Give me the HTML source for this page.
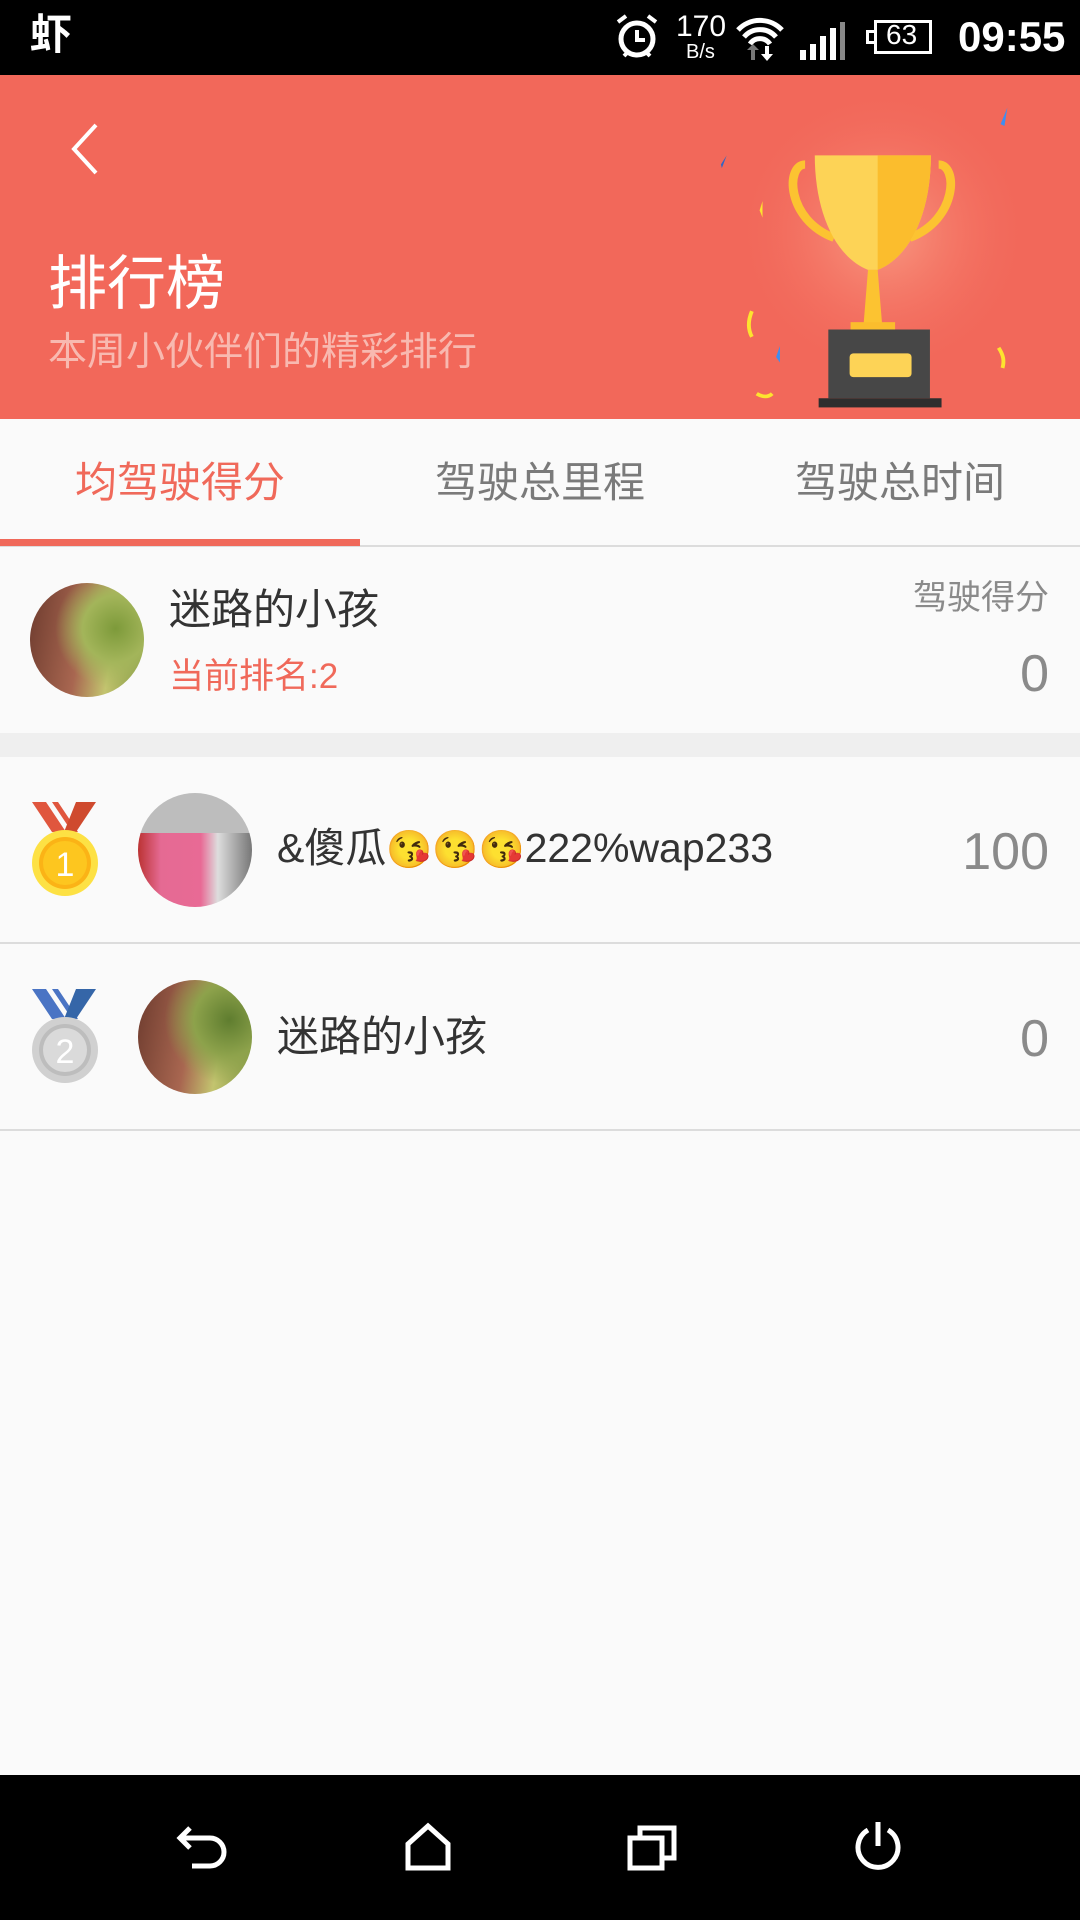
<!DOCTYPE html>
<html><head><meta charset="utf-8"><style>
*{margin:0;padding:0;box-sizing:border-box}
body{width:1080px;height:1920px;background:#fafafa;font-family:"Liberation Sans","Noto Sans CJK SC",sans-serif;position:relative;overflow:hidden}
.abs{position:absolute}
.sb{left:0;top:0;width:1080px;height:75px;background:#000;color:#fff}
.hd{left:0;top:75px;width:1080px;height:344px;background:#f2685a}
.t{white-space:nowrap;line-height:1}
.av{border-radius:50%;overflow:hidden}
.line{left:0;width:1080px;height:2px;background:#dcdcdc}
</style></head><body>
<div class="abs sb">
  <div class="abs t" style="left:30px;top:14px;font-size:42px;font-weight:bold">虾</div>
  <svg class="abs" style="left:612px;top:12px" width="50" height="50" viewBox="0 0 50 50"><circle cx="25" cy="27" r="16" fill="none" stroke="#fff" stroke-width="5"/><path d="M25 18v10h8M6 10l8-6M44 10l-8-6M12 44l4-4M38 44l-4-4" stroke="#fff" stroke-width="4" fill="none"/></svg>
  <div class="abs t" style="left:676px;top:12px;font-size:30px">170</div>
  <div class="abs t" style="left:686px;top:42px;font-size:20px">B/s</div>
  <svg class="abs" style="left:734px;top:12px" width="52" height="52" viewBox="0 0 52 52"><path d="M4 18a30 30 0 0 1 44 0M10 25a21 21 0 0 1 32 0M16 32a12 12 0 0 1 20 0" stroke="#fff" stroke-width="5" fill="none"/><path d="M17 48v-10l-4 0 6-6 6 6h-4v10z" fill="#777"/><path d="M31 34v8h-4l6 7 6-7h-4v-8z" fill="#fff"/></svg>
  <svg class="abs" style="left:798px;top:20px" width="48" height="40"><rect x="2" y="30" width="6" height="10" fill="#fff"/><rect x="12" y="24" width="6" height="16" fill="#fff"/><rect x="22" y="16" width="6" height="24" fill="#fff"/><rect x="32" y="8" width="6" height="32" fill="#fff"/><rect x="42" y="2" width="5" height="38" fill="#888"/></svg>
  <div class="abs" style="left:874px;top:20px;width:58px;height:34px;border:3px solid #fff"></div>
  <div class="abs" style="left:866px;top:30px;width:8px;height:14px;border:3px solid #fff;border-right:none"></div>
  <div class="abs t" style="left:886px;top:21px;font-size:28px;color:#fff">63</div>
  <div class="abs t" style="left:958px;top:16px;font-size:42px;font-weight:bold">09:55</div>
</div>
<div class="abs hd">
  <svg class="abs" style="left:66px;top:46px" width="36" height="56"><path d="M30 4L8 28l22 24" stroke="#fff" stroke-width="4" fill="none"/></svg>
  <div class="abs t" style="left:48px;top:180px;font-size:59px;color:#fff">排行榜</div>
  <div class="abs t" style="left:48px;top:258px;font-size:39px;color:#f8b9b0">本周小伙伴们的精彩排行</div>
  <svg class="abs" style="left:718px;top:7px" width="300" height="330" viewBox="0 0 310 360" preserveAspectRatio="none">
    <defs><radialGradient id="g" cx="0.55" cy="0.45" r="0.5"><stop offset="0" stop-color="#f99b84"/><stop offset="1" stop-color="#f2685a" stop-opacity="0"/></radialGradient></defs>
    <rect x="0" y="20" width="310" height="320" fill="url(#g)"/>
    <path d="M90 90c-20 0-20 60 30 80" stroke="#fcc331" stroke-width="9" fill="none"/>
    <path d="M228 90c20 0 20 60-30 80" stroke="#fcc331" stroke-width="9" fill="none"/>
    <path d="M100 80h120c0 60-20 110-55 125h-10c-35-15-55-65-55-125z" fill="#fdd356"/>
    <path d="M165 80h55c0 60-20 110-55 125z" fill="#fbbd2d"/>
    <path d="M155 205h10l5 65h-20z" fill="#fcc331"/>
    <rect x="137" y="262" width="46" height="8" fill="#fbbd2d"/>
    <rect x="114" y="270" width="105" height="75" fill="#474747"/>
    <rect x="104" y="345" width="127" height="10" fill="#2e2e2e"/>
    <rect x="136" y="296" width="64" height="26" rx="4" fill="#fdd356"/>
    <path d="M292 46l7-18-3 20z" fill="#3f8ef0"/>
    <path d="M3 90l6-10-5 14z" fill="#3566c1"/>
    <path d="M43 140l3-10v18z" fill="#fde32f"/>
    <path d="M35 250c-4 10-4 20 0 28" stroke="#fde32f" stroke-width="4" fill="none"/>
    <path d="M290 290c5 8 6 14 4 22" stroke="#fde32f" stroke-width="4" fill="none"/>
    <path d="M60 300l4-12v18z" fill="#3f8ef0"/>
    <path d="M40 340c6 4 12 4 16 0" stroke="#fde32f" stroke-width="4" fill="none"/>
  </svg>
</div>
<!-- tabs -->
<div class="abs t" style="left:0;top:462px;width:360px;text-align:center;font-size:42px;color:#f0695a">均驾驶得分</div>
<div class="abs t" style="left:360px;top:462px;width:360px;text-align:center;font-size:42px;color:#7a7a7a">驾驶总里程</div>
<div class="abs t" style="left:720px;top:462px;width:360px;text-align:center;font-size:42px;color:#7a7a7a">驾驶总时间</div>
<div class="abs line" style="top:545px"></div>
<div class="abs" style="left:0;top:539px;width:360px;height:7px;background:#f0695a"></div>
<!-- my row -->
<div class="abs av" style="left:30px;top:583px;width:114px;height:114px;background:radial-gradient(circle at 75% 40%,#7d9a3a 0,#a3b55a 30%,transparent 55%),linear-gradient(100deg,#6d3b2e 0,#a86650 45%,#c3c46f 70%,#7f9440 100%)"></div>
<div class="abs t" style="left:169px;top:589px;font-size:42px;color:#333">迷路的小孩</div>
<div class="abs t" style="left:169px;top:659px;font-size:35px;color:#f0695a">当前排名:2</div>
<div class="abs t" style="right:31px;top:581px;font-size:34px;color:#8a8a8a">驾驶得分</div>
<div class="abs t" style="right:31px;top:648px;font-size:52px;color:#8a8a8a">0</div>
<div class="abs" style="left:0;top:733px;width:1080px;height:24px;background:#efefef"></div>
<!-- row1 -->
<svg class="abs" style="left:30px;top:800px" width="70" height="100" viewBox="0 0 70 100">
  <path d="M2 2h14l20 30h-14zM22 2h6l20 30h-6z" fill="#e0563e"/><path d="M66 2h-20l-12 30h12z" fill="#cf4a2e"/>
  <circle cx="35" cy="63" r="33" fill="#fde144"/><circle cx="35" cy="63" r="26" fill="#fbb316"/><circle cx="35" cy="63" r="22" fill="#fdc61f"/>
  <text x="35" y="76" text-anchor="middle" font-size="34" fill="#fff" font-family="Liberation Sans">1</text>
</svg>
<div class="abs av" style="left:138px;top:793px;width:114px;height:114px;background:linear-gradient(180deg,#bdbdbd 0,#bdbdbd 35%,transparent 35%),linear-gradient(90deg,#b33 0,#e56a93 20%,#e86a95 55%,#ddd 70%,#777 100%)"></div>
<div class="abs t" style="left:277px;top:828px;font-size:41px;color:#333">&amp;傻瓜<span style="font-size:37px">😘😘😘</span>222%wap233</div>
<div class="abs t" style="right:31px;top:826px;font-size:52px;color:#8a8a8a">100</div>
<div class="abs line" style="top:942px"></div>
<!-- row2 -->
<svg class="abs" style="left:30px;top:987px" width="70" height="100" viewBox="0 0 70 100">
  <path d="M2 2h14l20 30h-14zM22 2h6l20 30h-6z" fill="#4a74c4"/><path d="M66 2h-20l-12 30h12z" fill="#3566a8"/>
  <circle cx="35" cy="63" r="33" fill="#d0d0d0"/><circle cx="35" cy="63" r="26" fill="#bdbdbd"/><circle cx="35" cy="63" r="22" fill="#dadada"/>
  <text x="35" y="76" text-anchor="middle" font-size="34" fill="#fff" font-family="Liberation Sans">2</text>
</svg>
<div class="abs av" style="left:138px;top:980px;width:114px;height:114px;background:radial-gradient(circle at 80% 35%,#5f7d2f 0,#8da24b 30%,transparent 55%),linear-gradient(100deg,#6d3b2e 0,#a86650 45%,#c3c46f 70%,#7f9440 100%)"></div>
<div class="abs t" style="left:277px;top:1016px;font-size:42px;color:#333">迷路的小孩</div>
<div class="abs t" style="right:31px;top:1013px;font-size:52px;color:#8a8a8a">0</div>
<div class="abs line" style="top:1129px"></div>
<!-- nav -->
<div class="abs" style="left:0;top:1775px;width:1080px;height:145px;background:#000"></div>
<svg class="abs" style="left:176px;top:1822px" width="56" height="50"><path d="M14 6L4 16l10 10M4 16h30a14 14 0 0 1 0 28H16" stroke="#fff" stroke-width="5" fill="none"/></svg>
<svg class="abs" style="left:404px;top:1822px" width="48" height="50"><path d="M4 46V22L24 4l20 18v24z" stroke="#fff" stroke-width="5" fill="none"/></svg>
<svg class="abs" style="left:627px;top:1824px" width="52" height="48"><rect x="3" y="14" width="32" height="30" stroke="#fff" stroke-width="5" fill="none"/><path d="M13 12V4h34v30h-10" stroke="#fff" stroke-width="5" fill="none"/></svg>
<svg class="abs" style="left:852px;top:1820px" width="52" height="52"><path d="M16 10a20 20 0 1 0 20 0" stroke="#fff" stroke-width="5" fill="none"/><path d="M26 2v24" stroke="#fff" stroke-width="5"/></svg>
</body></html>
